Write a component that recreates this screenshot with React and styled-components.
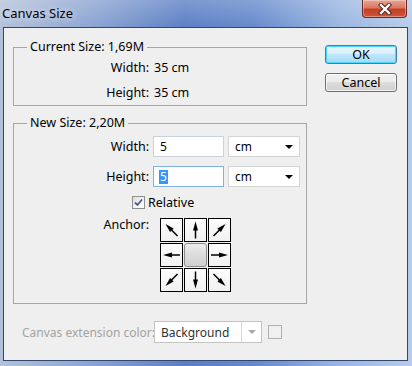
import React from 'react';
import styled, { createGlobalStyle } from 'styled-components';

const GlobalStyle = createGlobalStyle`
  html, body {
    margin: 0;
    padding: 0;
  }
  body {
    font-family: "Noto Sans", "Liberation Sans", sans-serif;
    font-size: 12px;
    color: #000;
  }
`;

const Frame = styled.div`
  width: 412px;
  height: 366px;
  box-sizing: border-box;
  display: flex;
  flex-direction: column;
  padding: 0 4px 5px 3px;
  background:
    linear-gradient(180deg, rgba(255, 255, 255, 0.22) 0%, rgba(255, 255, 255, 0) 8%),
    linear-gradient(90deg, #b3c1da 0%, #8ca4d2 22%, #5a7dc4 45%, #6589cc 62%, #98b4e1 82%, #b7cbea 100%);
`;

const TitleBar = styled.div`
  height: 27px;
  display: flex;
  align-items: flex-start;
  justify-content: space-between;
`;

const Title = styled.span`
  margin-top: 5px;
  margin-left: -1px;
  line-height: 16px;
  font-size: 13px;
  text-shadow: 0 0 6px rgba(255, 255, 255, 0.8);
`;

const CloseButton = styled.div`
  width: 45px;
  height: 18px;
  box-sizing: border-box;
  margin-right: 1px;
  display: flex;
  align-items: center;
  justify-content: center;
  border: 1px solid #6b2a22;
  border-top: none;
  border-radius: 0 0 4px 4px;
  background: linear-gradient(180deg, #e9a493 0%, #d87a64 45%, #c43f27 55%, #d0553a 100%);
  box-shadow: inset 0 0 0 1px rgba(255, 255, 255, 0.35);
`;

const Client = styled.div`
  flex: 1;
  display: flex;
  gap: 18px;
  padding: 11px 10px 0 9px;
  background: #efefef;
  border: 1px solid #33466b;
`;

const LeftColumn = styled.div`
  width: 294px;
  display: flex;
  flex-direction: column;
`;

const Group = styled.fieldset`
  margin: ${(p) => p.$top || 0}px 0 0;
  padding: 0 0 ${(p) => p.$bottom || 0}px;
  border: 1px solid #a6a6a6;
  min-width: 0;
`;

const Legend = styled.legend`
  margin-left: 13px;
  padding: 0 3px;
  line-height: 16px;
  font-size: 12.5px;
`;

const FieldGrid = styled.div`
  display: grid;
  grid-template-columns: 135px auto;
  column-gap: ${(p) => p.$colGap}px;
  row-gap: ${(p) => p.$rowGap || 0}px;
  grid-auto-rows: ${(p) => p.$rowHeight || 'auto'};
  padding-top: ${(p) => p.$padTop || 0}px;
  align-items: center;
`;

const Label = styled.span`
  text-align: right;
  line-height: 16px;
  font-size: 12.5px;
  align-self: ${(p) => (p.$top ? 'start' : 'center')};
  margin-top: ${(p) => (p.$top ? -1 : 0)}px;
`;

const Value = styled.span`
  line-height: 16px;
  font-size: 12.5px;
`;

const InputRow = styled.div`
  display: flex;
  gap: 4px;
`;

const TextBox = styled.div`
  width: 71px;
  height: 21px;
  box-sizing: border-box;
  display: flex;
  align-items: center;
  padding-left: 6px;
  background: #fff;
  border: 1px solid ${(p) => (p.$focused ? '#7eb4ea' : '#c9d2dc')};
`;

const Selection = styled.span`
  background: #3399ff;
  color: #fff;
  line-height: 14px;
  padding: 0 1px;
  margin-left: -1px;
`;

const Select = styled.div`
  width: ${(p) => p.$width}px;
  height: ${(p) => p.$height}px;
  box-sizing: border-box;
  display: flex;
  align-items: stretch;
  background: #fff;
  border: 1px solid ${(p) => (p.$disabled ? '#c3c3c3' : '#d4d4d4')};
  color: ${(p) => (p.$disabled ? '#333' : '#000')};
`;

const SelectText = styled.span`
  flex: 1;
  display: flex;
  align-items: center;
  padding-left: ${(p) => p.$pad}px;
`;

const SelectArrow = styled.span`
  width: ${(p) => p.$width}px;
  display: flex;
  align-items: center;
  justify-content: center;
  border-left: ${(p) => (p.$divider ? '1px solid #d8d8d8' : 'none')};
  &::after {
    content: '';
    border-left: 4px solid transparent;
    border-right: 4px solid transparent;
    border-top: 4px solid ${(p) => (p.$disabled ? '#a8a8a8' : '#000')};
  }
`;

const CheckRow = styled.label`
  grid-column: 1 / -1;
  display: flex;
  align-items: center;
  gap: 3px;
  padding-left: 118px;
  height: 13px;
  line-height: 16px;
  font-size: 12.5px;
`;

const CheckBox = styled.span`
  width: 13px;
  height: 13px;
  box-sizing: border-box;
  display: flex;
  align-items: center;
  justify-content: center;
  border: 1px solid #8e8f8f;
  background: linear-gradient(135deg, #dcdcdc 0%, #f6f6f6 60%, #fff 100%);
`;

const AnchorGrid = styled.div`
  margin-left: 7px;
  display: grid;
  grid-template-columns: repeat(3, 23px);
  grid-auto-rows: 24px;
  gap: 1px;
`;

const AnchorCell = styled.div`
  box-sizing: border-box;
  display: flex;
  align-items: center;
  justify-content: center;
  border: 1px solid ${(p) => (p.$selected ? '#8a8a8a' : '#000')};
  border-radius: ${(p) => (p.$selected ? '3px' : '0')};
  background: ${(p) =>
    p.$selected
      ? 'linear-gradient(180deg, #ececec 0%, #dcdcdc 50%, #d0d0d0 100%)'
      : 'linear-gradient(180deg, #fdfdfd 0%, #f1f1f1 100%)'};
`;

const ExtensionRow = styled.div`
  margin-top: 17px;
  display: flex;
  align-items: center;
  padding-left: 9px;
`;

const DisabledLabel = styled.span`
  width: 132px;
  white-space: nowrap;
  color: #a3a3a3;
`;

const Swatch = styled.span`
  width: 14px;
  height: 14px;
  margin-left: 6px;
  box-sizing: border-box;
  border: 1px solid #b0b0b0;
  background: #f0f0f0;
`;

const ButtonColumn = styled.div`
  display: flex;
  flex-direction: column;
  gap: 9px;
  padding-top: 6px;
`;

const Button = styled.button`
  width: 72px;
  height: 19px;
  padding: 0;
  font-family: inherit;
  font-size: 12.5px;
  line-height: 16px;
  color: #000;
  border-radius: 3px;
  border: 1px solid ${(p) => (p.$default ? '#3c7fb1' : '#707070')};
  background: ${(p) =>
    p.$default
      ? 'linear-gradient(180deg, #eaf6fd 0%, #d9f0fc 45%, #bee6fd 50%, #a7d9f5 100%)'
      : 'linear-gradient(180deg, #f2f2f2 0%, #ebebeb 45%, #dddddd 50%, #cfcfcf 100%)'};
  box-shadow: inset 0 0 0 1px ${(p) => (p.$default ? '#48dafe' : 'rgba(255,255,255,0.7)')};
`;

const ARROWS = [315, 0, 45, 270, null, 90, 225, 180, 135];

function Arrow({ angle }) {
  return (
    <svg width="21" height="22" viewBox="0 0 21 22">
      <g transform={`rotate(${angle} 10.5 11)`}>
        <line x1="10.5" y1="19.5" x2="10.5" y2="9" stroke="#000" strokeWidth="1.5" />
        <polygon points="10.5,2.5 8,11.5 13,11.5" fill="#000" />
      </g>
    </svg>
  );
}

function CloseGlyph() {
  return (
    <svg width="14" height="12" viewBox="0 0 14 12">
      <path d="M3 2 L11 10 M11 2 L3 10" stroke="#4a1a14" strokeWidth="4.2" strokeLinecap="square" />
      <path d="M3 2 L11 10 M11 2 L3 10" stroke="#fff" strokeWidth="2.4" strokeLinecap="square" />
    </svg>
  );
}

function CheckMark() {
  return (
    <svg width="9" height="9" viewBox="0 0 9 9">
      <path d="M1 4.5 L3.5 7 L8 1.5" fill="none" stroke="#4a5a86" strokeWidth="1.8" />
    </svg>
  );
}

export default function App() {
  return (
    <Frame>
      <GlobalStyle />
      <TitleBar>
        <Title>Canvas Size</Title>
        <CloseButton>
          <CloseGlyph />
        </CloseButton>
      </TitleBar>
      <Client>
        <LeftColumn>
          <Group $bottom={0}>
            <Legend>Current Size: 1,69M</Legend>
            <FieldGrid $colGap={5} $rowHeight="25px">
              <Label>Width:</Label>
              <Value>35 cm</Value>
              <Label>Height:</Label>
              <Value>35 cm</Value>
            </FieldGrid>
          </Group>

          <Group $top={9} $bottom={11}>
            <Legend>New Size: 2,20M</Legend>
            <FieldGrid $colGap={4} $rowGap={9} $padTop={5}>
              <Label>Width:</Label>
              <InputRow>
                <TextBox>5</TextBox>
                <Select $width={72} $height={21}>
                  <SelectText $pad={6}>cm</SelectText>
                  <SelectArrow $width={20} />
                </Select>
              </InputRow>
              <Label>Height:</Label>
              <InputRow>
                <TextBox $focused>
                  <Selection>5</Selection>
                </TextBox>
                <Select $width={72} $height={21}>
                  <SelectText $pad={6}>cm</SelectText>
                  <SelectArrow $width={20} />
                </Select>
              </InputRow>
              <CheckRow>
                <CheckBox>
                  <CheckMark />
                </CheckBox>
                Relative
              </CheckRow>
              <Label $top>Anchor:</Label>
              <AnchorGrid>
                {ARROWS.map((angle, i) => (
                  <AnchorCell key={i} $selected={angle === null}>
                    {angle !== null && <Arrow angle={angle} />}
                  </AnchorCell>
                ))}
              </AnchorGrid>
            </FieldGrid>
          </Group>

          <ExtensionRow>
            <DisabledLabel>Canvas extension color:</DisabledLabel>
            <Select $width={108} $height={22} $disabled>
              <SelectText $pad={6}>Background</SelectText>
              <SelectArrow $width={19} $divider $disabled />
            </Select>
            <Swatch />
          </ExtensionRow>
        </LeftColumn>

        <ButtonColumn>
          <Button $default>OK</Button>
          <Button>Cancel</Button>
        </ButtonColumn>
      </Client>
    </Frame>
  );
}
